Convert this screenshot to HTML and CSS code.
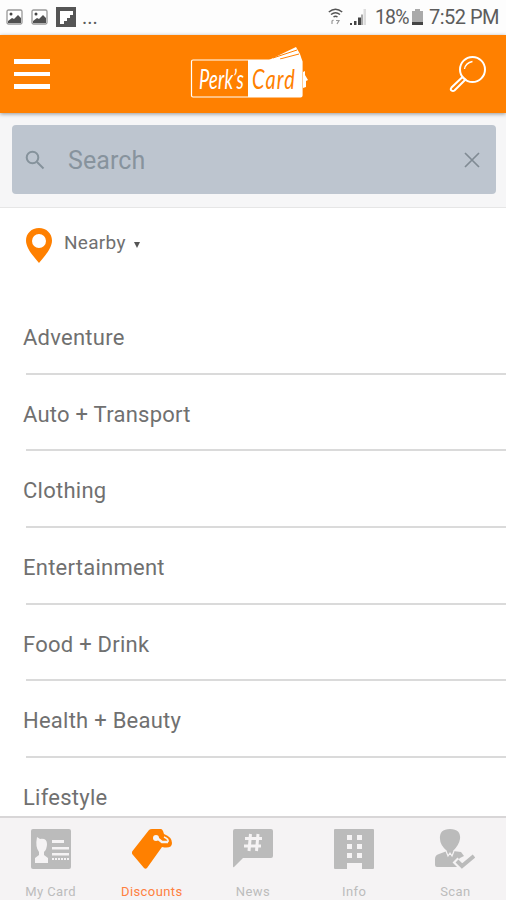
FILE: index.html
```html
<!DOCTYPE html>
<html lang="en">
<head>
<meta charset="utf-8">
<title>Perks Card</title>
<link rel="stylesheet" href="styles.css">
</head>
<body>
<div class="app">
  <div class="status">
    <div class="status-left">
      <svg width="17" height="16" viewBox="0 0 17 16"><rect x="1" y="1" width="15" height="14" rx="1.5" fill="#fff" stroke="#999" stroke-width="1.3"/><circle cx="5" cy="5" r="1.5" fill="#444"/><path d="M2 12l4-3 2 1 4-4 3 3v5H2z" fill="#505050"/></svg>
      <svg width="17" height="16" viewBox="0 0 17 16"><rect x="1" y="1" width="15" height="14" rx="1.5" fill="#fff" stroke="#999" stroke-width="1.3"/><circle cx="5" cy="5" r="1.5" fill="#444"/><path d="M2 12l4-3 2 1 4-4 3 3v5H2z" fill="#505050"/></svg>
      <svg width="20" height="20" viewBox="0 0 20 20"><path fill="#555" d="M0 0h20v20H0z"/><path fill="#fff" d="M4 4h13v4h-3v3h-3v3H8v3H4z"/></svg>
      <span class="dots">...</span>
    </div>
    <div class="status-right">
      <svg class="wifi" width="15" height="18" viewBox="0 0 15 18" fill="none" stroke="#555" stroke-width="1.5"><path d="M.8 4Q7.500-1.500 14.200 4M3 6.500q4.500-3.500 9 0M5.500 9q2-1.500 4 0"/><path stroke="#999" stroke-width="1.200" d="M4 16v-3l1.500-1M8 12.500h3L9 16"/></svg>
      <svg class="signal" width="17" height="17" viewBox="0 0 17 17"><path fill="#444" d="M0 14h2v2H0zM4 12h2.500v4H4zM8 8.500h3V16H8z"/><path fill="#aaa" d="M11 5.500h2V16h-2z"/><path fill="#ddd" d="M13.500 0H16v16h-2.500z"/></svg>
      <span class="percent">18%</span>
      <svg class="battery" width="11" height="17" viewBox="0 0 11 17"><path fill="#aaa" d="M3 0h5v2h3v12H0V2h3z"/><path fill="#444" d="M0 13h11v3H0z"/></svg>
      <span class="time">7:52 PM</span>
    </div>
  </div>

  <header class="header">
    <div class="menu"><i></i><i></i><i></i></div>
    <svg class="logo" width="120" height="54" viewBox="0 0 120 54">
      <path fill="#fff" d="M79 14l27-13 4 7 2 6z"/>
      <path fill="none" stroke="#ff8000" d="M83 12l24-8M90 13l19-5"/>
      <path fill="#fff" d="M113 26l2-1v4l3 5-2 1v6l-3 1z"/>
      <rect x="1.500" y="14" width="110.500" height="37" rx="1.500" fill="none" stroke="#fff" stroke-width="1.200"/>
      <path fill="#fff" d="M58 14h54v37H58z"/>
      <g transform="translate(9 43) scale(.68 1)"><text class="script" textLength="66" fill="#fff">Perk’s</text></g>
      <g transform="translate(62 43) scale(.74 1)"><text class="script" textLength="58" fill="#ff8000">Card</text></g>
    </svg>
    <svg class="find" width="38" height="38" viewBox="0 0 38 38" fill="none" stroke="#fff" stroke-width="2"><circle cx="23.500" cy="14.500" r="12.500"/><path d="M13.500 22L2.500 32.500q-1.500 2 0 3t3 0L16.500 24.500z"/><path stroke-width="1.300" d="M15.500 14q1-6 8-7.500"/></svg>
  </header>

  <div class="search-area">
    <div class="search">
      <svg width="20" height="20" viewBox="0 0 20 20" fill="none" stroke="#85929b" stroke-width="2"><circle cx="7.500" cy="7.500" r="5.800"/><path d="M12 12l6.500 6.500"/></svg>
      <span class="placeholder">Search</span>
      <svg width="16" height="16" viewBox="0 0 16 16" stroke="#808b94" stroke-width="1.700"><path d="M1 1l14 14M15 1L1 15"/></svg>
    </div>
  </div>

  <main class="content">
    <div class="nearby">
      <svg width="26" height="35" viewBox="0 0 26 35"><path fill="#ff8000" fill-rule="evenodd" d="M13 0C5.500 0 0 5.500 0 12.500 0 20 7 28 13 35c6-7 13-15 13-22.500C26 5.500 20.500 0 13 0zm0 6a7 7 0 1 1 0 14 7 7 0 0 1 0-14z"/></svg>
      <span class="nearby-label">Nearby</span>
      <svg class="caret" width="6" height="6" viewBox="0 0 6 6"><path fill="#555" d="M0 0h6L3 6z"/></svg>
    </div>
    <ul class="list">
      <li><span>Adventure</span></li>
      <li><span>Auto + Transport</span></li>
      <li><span>Clothing</span></li>
      <li><span>Entertainment</span></li>
      <li><span>Food + Drink</span></li>
      <li><span>Health + Beauty</span></li>
      <li><span>Lifestyle</span></li>
    </ul>
  </main>

  <nav class="tabs">
    <div class="tab">
      <svg width="40" height="40" viewBox="0 0 40 40"><rect width="40" height="40" rx="2" fill="#bbb"/><path fill="#f5f3f4" d="M6 8l3 2q7-1 7 5 0 5-3 8v3l4 3v5H4v-5l4-3v-3q-4-5-2-15zM21 11h12v3H21zM21 18h17v2.500H21zM21 24h17v2.500H21z"/><path stroke="#f5f3f4" stroke-width="2" stroke-dasharray="2 1" d="M21 30h17"/></svg>
      <span>My Card</span>
    </div>
    <div class="tab active">
      <svg width="40" height="40" viewBox="0 0 40 40"><path fill="#ff8000" d="M17 1q1-1 3-1h9q1 0 2 2l1 3q8 3 8 9t-10 4L15 39q-1.500 1.500-3 0L1 26q-2-2-.5-4z"/><circle cx="24" cy="9" r="3" fill="#f5f3f4"/><path fill="none" stroke="#f5f3f4" stroke-width="2.500" d="M25 9l5 4h6"/><path fill="none" stroke="#f5f3f4" stroke-width="1.500" d="M32 8q5 2 4 5"/></svg>
      <span>Discounts</span>
    </div>
    <div class="tab">
      <svg width="40" height="40" viewBox="0 0 40 40"><path fill="#bbb" d="M2 0h36q2 0 2 2v25q0 2-2 2H10L1 38q-1 1-1-1V2q0-2 2-2z"/><path fill="none" stroke="#f5f3f4" stroke-width="3" d="M17.500 5l-1.500 17M25 5l-1.500 17M12 9.500h17M11 17h17"/></svg>
      <span>News</span>
    </div>
    <div class="tab">
      <svg width="40" height="40" viewBox="0 0 40 40"><path fill="#bbb" d="M1 0h38q1 0 1 1v38q0 1-1 1H28v-6H13v6H1q-1 0-1-1V1q0-1 1-1z"/><path fill="#f5f3f4" d="M13 6h5v5h-5zM23 6h5v5h-5zM13 15h5v5h-5zM23 15h5v5h-5zM13 24h5v5h-5zM23 24h5v5h-5z"/></svg>
      <span>Info</span>
    </div>
    <div class="tab">
      <svg width="40" height="40" viewBox="0 0 40 40"><path fill="#bbb" d="M15 0q11 0 10 10-1 6-7 12l8 1 3 4-4 2-5 5 3 4H2q-2 0-2-2v-6q0-4 4-5l8-3Q5 16 5 10 4 0 15 0z"/><path fill="none" stroke="#f5f3f4" stroke-width="1.200" d="M11 22l2 5 2-3 2 3 2-5"/><path fill="none" stroke="#f5f3f4" stroke-width="7" d="M20 31l7 7 13-12"/><path fill="none" stroke="#bbb" stroke-width="4" d="M22 32l5 5 12-10"/></svg>
      <span>Scan</span>
    </div>
  </nav>
</div>
</body>
</html>
```
FILE: styles.css
```css
* { box-sizing: border-box; }
body { margin: 0; font-family: Roboto, sans-serif; background: #fff; }
svg { display: block; flex: none; }
.app { width: 506px; height: 900px; display: flex; flex-direction: column; overflow: hidden; }

.status { height: 35px; flex: none; display: flex; justify-content: space-between; background: #fdfdfd; color: #5c5c5c; padding: 0 7px 1px 6px; }
.status-left, .status-right { display: flex; align-items: center; }
.status-left { gap: 8px; }
.dots { font-size: 20px; line-height: 24px; margin-left: -2px; }
.status-right { font-size: 20px; }
.signal { margin-left: 7px; }
.percent { margin-left: 8px; width: 34px; font-size: 19.500px; letter-spacing: -0.8px; }
.battery { margin-left: 3px; }
.time { margin-left: 6px; letter-spacing: -0.5px; }

.header { height: 78px; flex: none; display: flex; align-items: center; justify-content: space-between; padding: 0 19px 0 14px; background: #ff8000; box-shadow: 0 1px 4px rgba(0, 0, 0, 0.4); position: relative; }
.menu { width: 36px; display: grid; gap: 8px; }
.menu i { height: 4.600px; background: #fff; }
.logo { margin-top: -2px; }
.script { font-family: Lato, sans-serif; font-style: italic; font-size: 27px; }

.search-area { height: 95px; flex: none; padding: 12px 10px 0 12px; background: #f6f6f7; border-bottom: 1px solid #e6e6e6; }
.search { height: 69px; display: flex; align-items: center; padding: 0 16px 0 13px; background: #bdc5cf; border-radius: 4px; }
.placeholder { flex: 1; margin-left: 23px; padding-top: 2px; font-size: 25px; letter-spacing: 0.1px; color: #87939d; }

.content { flex: 1; min-height: 0; overflow: hidden; }
.nearby { height: 90px; display: flex; padding: 20px 0 0 26px; }
.nearby-label { margin-left: 12px; font-size: 19px; line-height: 30px; color: #707070; letter-spacing: 0.3px; }
.caret { margin: 14px 0 0 8px; }
.list { list-style: none; margin: 0; padding: 0 0 0 26px; }
.list li { height: 76.700px; display: flex; align-items: center; padding-top: 4px; border-bottom: 2px solid #dadada; font-size: 22px; letter-spacing: 0.25px; color: #707070; }
.list span { margin-left: -3px; }

.tabs { height: 84px; flex: none; display: grid; grid-template-columns: repeat(5, 1fr); background: #f5f3f4; border-top: 2px solid #d8d6d7; }
.tab { display: flex; flex-direction: column; align-items: center; padding-top: 11px; font-size: 13px; letter-spacing: 0.4px; color: #bcbcbc; }
.tab span { margin-top: 14px; line-height: 17px; }
.active { color: #ff8040; }
```
